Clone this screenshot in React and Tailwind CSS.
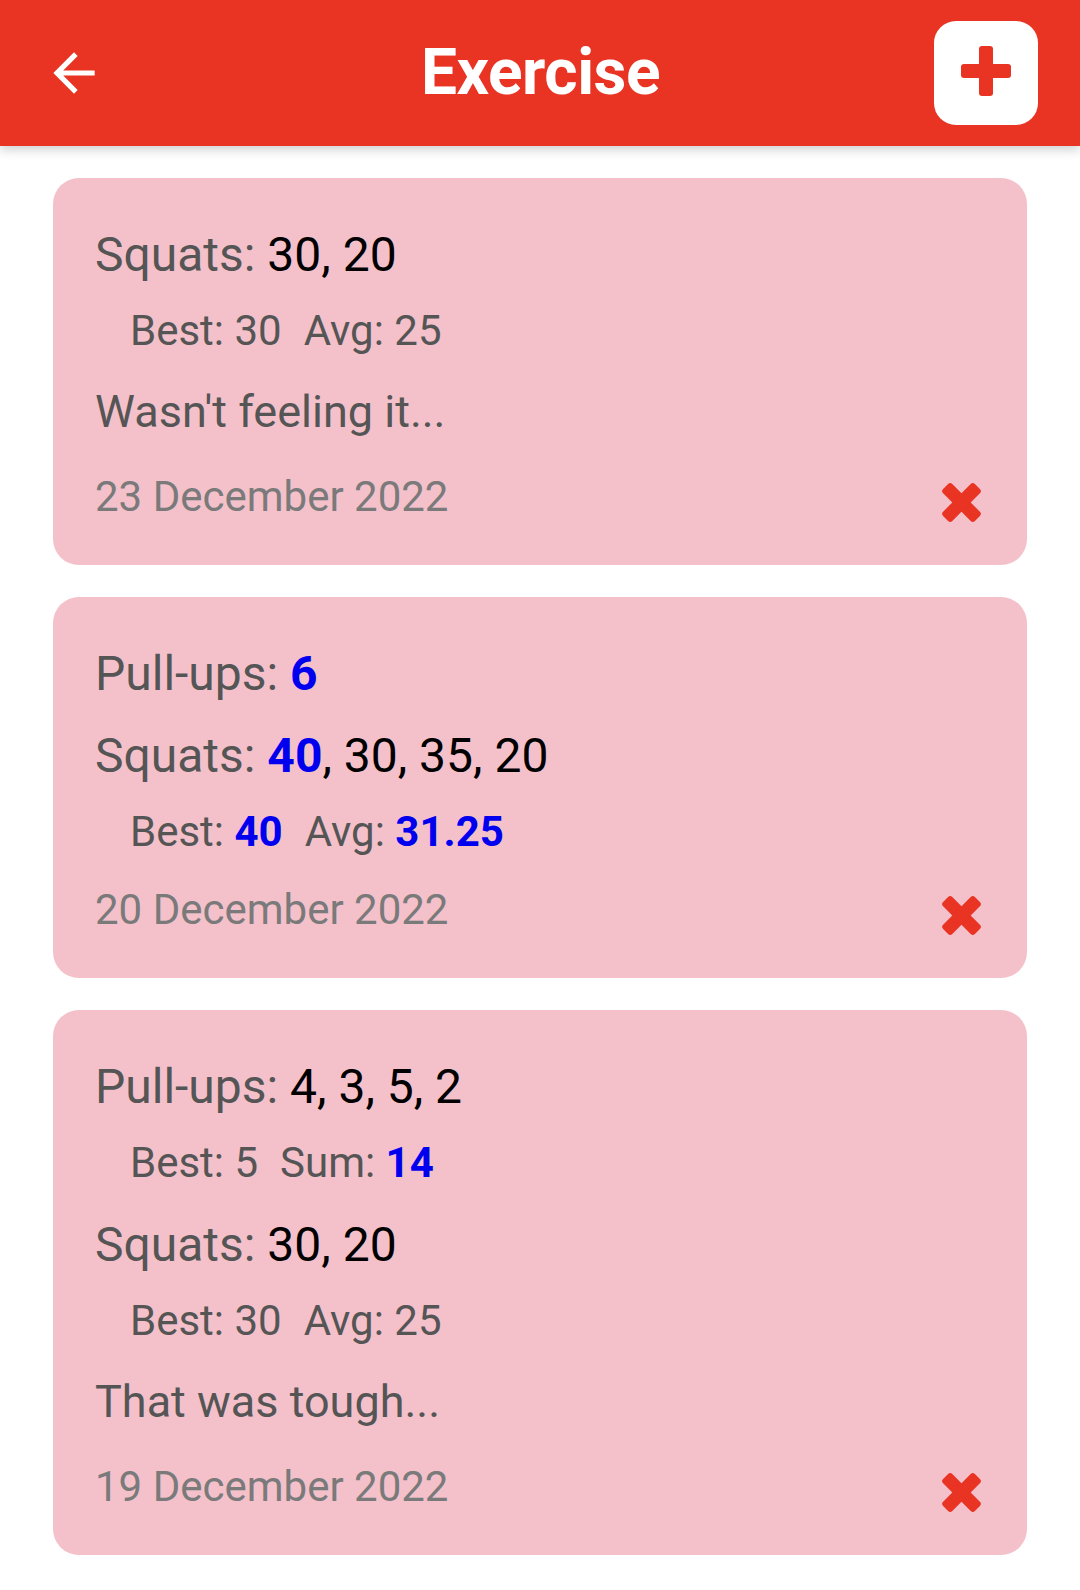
const cards = [
  {
    exercises: [
      {
        name: "Squats",
        values: [{ v: "30" }, { v: "20" }],
        stats: [
          { label: "Best", v: "30" },
          { label: "Avg", v: "25" },
        ],
      },
    ],
    note: "Wasn't feeling it...",
    date: "23 December 2022",
  },
  {
    exercises: [
      { name: "Pull-ups", values: [{ v: "6", hi: true }] },
      {
        name: "Squats",
        values: [{ v: "40", hi: true }, { v: "30" }, { v: "35" }, { v: "20" }],
        stats: [
          { label: "Best", v: "40", hi: true },
          { label: "Avg", v: "31.25", hi: true },
        ],
      },
    ],
    date: "20 December 2022",
  },
  {
    exercises: [
      {
        name: "Pull-ups",
        values: [{ v: "4" }, { v: "3" }, { v: "5" }, { v: "2" }],
        stats: [
          { label: "Best", v: "5" },
          { label: "Sum", v: "14", hi: true },
        ],
      },
      {
        name: "Squats",
        values: [{ v: "30" }, { v: "20" }],
        stats: [
          { label: "Best", v: "30" },
          { label: "Avg", v: "25" },
        ],
      },
    ],
    note: "That was tough...",
    date: "19 December 2022",
  },
];

// top margin of a row depends on what sits above it
const titleGap = { none: "", title: "mt-[26px]", stats: "mt-[30px]" };
const noteGap = { title: "mt-[31px]", stats: "mt-[31px]" };
const dateGap = { title: "mt-[30px]", stats: "mt-[30px]", note: "mt-[35px]" };

function BackArrow() {
  return (
    <svg viewBox="0 0 24 24" className="w-[62px] h-[62px]" fill="white">
      <path d="M20 11H7.83l5.59-5.59L12 4l-8 8 8 8 1.41-1.41L7.83 13H20v-2z" />
    </svg>
  );
}

function PlusIcon() {
  return (
    <svg viewBox="0 0 50 50" className="w-[50px] h-[50px]" fill="#e93323">
      <rect x="0" y="18" width="50" height="14" rx="3" />
      <rect x="18" y="0" width="14" height="50" rx="3" />
    </svg>
  );
}

function CrossIcon() {
  return (
    <svg viewBox="0 0 41 41" className="w-[41px] h-[41px]" fill="#e93323">
      <rect x="-2" y="14" width="45" height="13" rx="3" transform="rotate(45 20.5 20.5)" />
      <rect x="-2" y="14" width="45" height="13" rx="3" transform="rotate(-45 20.5 20.5)" />
    </svg>
  );
}

function Value({ v, hi }) {
  return <span className={hi ? "font-bold text-[#0000ee]" : "text-black"}>{v}</span>;
}

function Card({ card }) {
  const rows = [];
  let prev = "none";
  card.exercises.forEach((ex, i) => {
    rows.push(
      <div key={"t" + i} className={`text-[48px] leading-[56px] text-[#555555] ${titleGap[prev]}`}>
        {ex.name}:{" "}
        {ex.values.map((val, j) => (
          <span key={j}>
            {j > 0 && <span className="text-black">, </span>}
            <Value {...val} />
          </span>
        ))}
      </div>
    );
    prev = "title";
    if (ex.stats) {
      rows.push(
        <div key={"s" + i} className="mt-[24px] pl-[35px] text-[42px] leading-[48px] text-[#555555]">
          {ex.stats.map((s, j) => (
            <span key={j} className={j > 0 ? "ml-[22px]" : ""}>
              {s.label}: {s.hi ? <span className="font-bold text-[#0000ee]">{s.v}</span> : s.v}
            </span>
          ))}
        </div>
      );
      prev = "stats";
    }
  });
  if (card.note) {
    rows.push(
      <div key="note" className={`text-[45px] leading-[52px] text-[#555555] ${noteGap[prev]}`}>
        {card.note}
      </div>
    );
    prev = "note";
  }
  rows.push(
    <div key="date" className={`flex items-end justify-between ${dateGap[prev]}`}>
      <span className="text-[42px] leading-[48px] text-[#7a7a7a]">{card.date}</span>
      <button className="mb-[-2px] mr-[2px]">
        <CrossIcon />
      </button>
    </div>
  );
  return (
    <div className="rounded-[26px] bg-[#f4c1cb] pl-[42px] pr-[43px] pt-[49px] pb-[44px]">{rows}</div>
  );
}

export default function App() {
  return (
    <div className="min-h-[1590px] bg-white font-['Roboto',sans-serif]">
      <header className="relative z-10 flex h-[146px] items-center justify-between bg-[#e93323] pl-[43px] pr-[42px] shadow-[0_4px_10px_rgba(0,0,0,0.18)]">
        <button className="w-[104px]">
          <BackArrow />
        </button>
        <h1 className="text-[64px] font-bold leading-none tracking-[-0.5px] text-white">Exercise</h1>
        <button className="flex h-[104px] w-[104px] items-center justify-center rounded-[22px] bg-white pb-[5px]">
          <PlusIcon />
        </button>
      </header>
      <main className="flex flex-col gap-[32px] px-[53px] pt-[32px] pb-[36px]">
        {cards.map((c, i) => (
          <Card key={i} card={c} />
        ))}
      </main>
    </div>
  );
}
